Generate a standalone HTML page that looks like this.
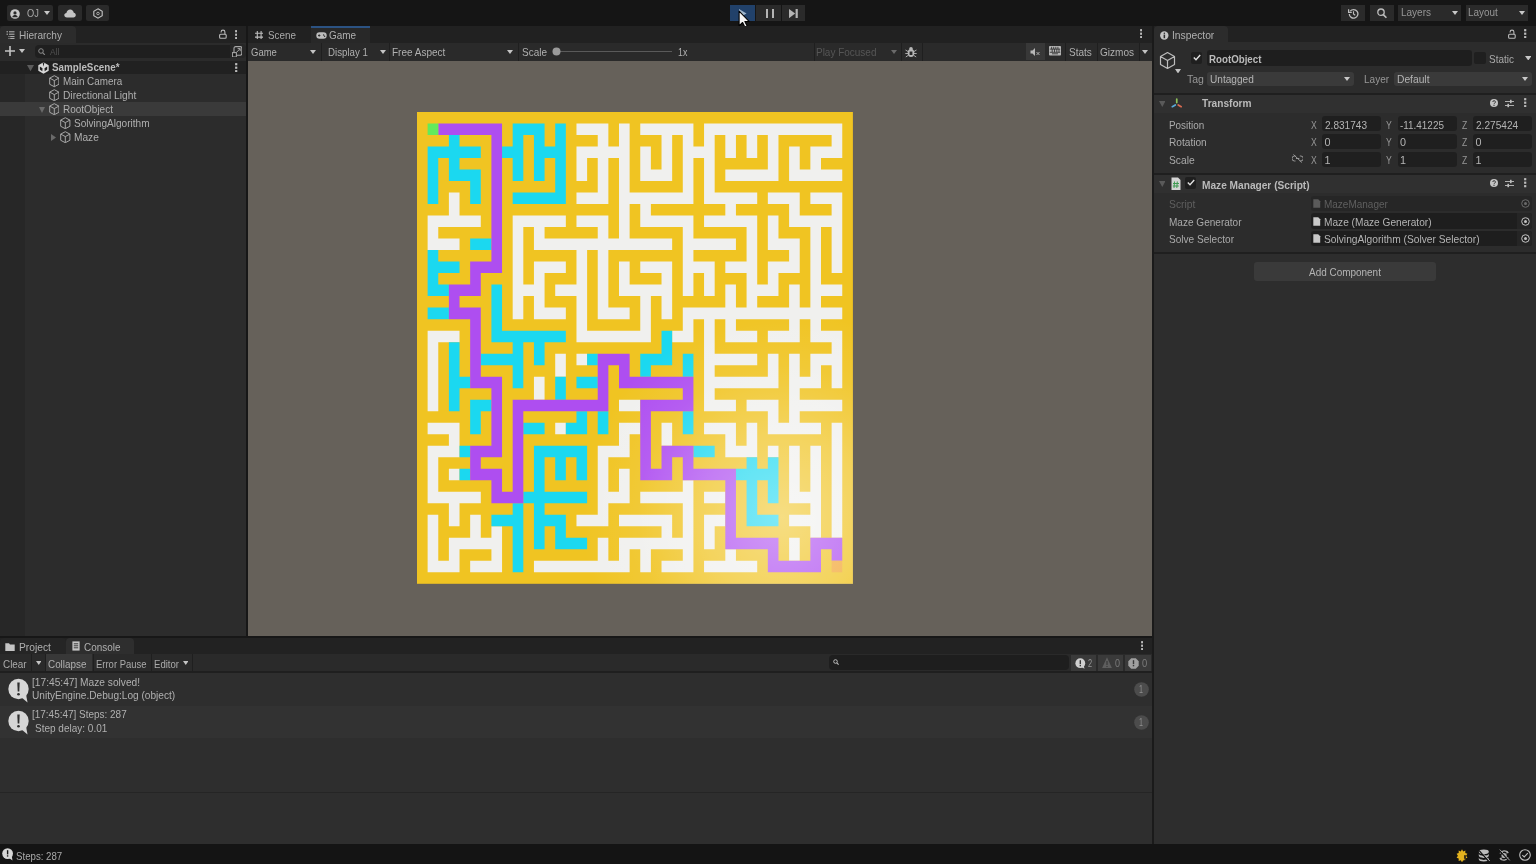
<!DOCTYPE html>
<html><head><meta charset="utf-8"><style>*{margin:0;padding:0;box-sizing:border-box}
html,body{width:1536px;height:864px;overflow:hidden;background:#141414}
body{position:relative;font-family:"Liberation Sans",sans-serif;font-size:11px;color:#c2c2c2}
.a{position:absolute}
.t{position:absolute;white-space:nowrap;line-height:1;transform-origin:0 0;filter:blur(0.35px)}
</style></head><body>
<div class="a" style="left:0px;top:0px;width:1536px;height:26px;background:#151515;"></div>
<div class="a" style="left:6.5px;top:5px;width:46.5px;height:16px;background:#2a2a2a;border-radius:2px"></div>
<div class="a" style="left:58px;top:5px;width:23.5px;height:16px;background:#2a2a2a;border-radius:2px"></div>
<div class="a" style="left:86px;top:5px;width:23px;height:16px;background:#2a2a2a;border-radius:2px"></div>
<svg class="a" style="left:10px;top:8.5px" width="10" height="10" viewBox="0 0 10 10"><circle cx="5" cy="5" r="4.8" fill="#c8c8c8"/><circle cx="5" cy="3.9" r="1.6" fill="#2a2a2a"/><path d="M2.2 8.2C2.8 6.6 3.8 6.1 5 6.1S7.2 6.6 7.8 8.2" fill="#2a2a2a"/></svg>
<div class="t" style="left:26.80px;top:8.21px;font-size:10.5px;color:#aaaaaa;transform:scaleX(0.8810);">OJ</div>
<svg class="a" style="left:44.2px;top:11.2px" width="6" height="4" viewBox="0 0 6 4"><path d="M0 0H6L3.0 4z" fill="#c8c8c8"/></svg>
<svg class="a" style="left:63.5px;top:9px" width="12" height="9" viewBox="0 0 12 9"><path d="M3 8.5C1.3 8.5 0.3 7.4 0.3 6.1C0.3 4.9 1.2 4 2.4 3.9C2.8 1.9 4.3 0.6 6.2 0.6C8.1 0.6 9.5 2 9.8 3.8C11 3.9 11.8 4.9 11.8 6.1C11.8 7.4 10.8 8.5 9.4 8.5Z" fill="#c4c4c4"/></svg>
<svg class="a" style="left:92.5px;top:8px" width="10" height="11" viewBox="0 0 10 11"><path d="M5 0.8L9.2 3.2V7.8L5 10.2L0.8 7.8V3.2Z" fill="none" stroke="#c4c4c4" stroke-width="1.1"/><circle cx="5" cy="5.5" r="1.3" fill="none" stroke="#c4c4c4" stroke-width="0.8"/></svg>
<div class="a" style="left:730.3px;top:4.8px;width:25px;height:16px;background:#21416a;"></div>
<div class="a" style="left:756px;top:5px;width:25.2px;height:16px;background:#2a2a2a;"></div>
<div class="a" style="left:782px;top:5px;width:23.3px;height:16px;background:#2a2a2a;"></div>
<svg class="a" style="left:739px;top:8.5px" width="8" height="9" viewBox="0 0 8 9"><path d="M0 0L7.5 4.5L0 9Z" fill="#9fb6cc"/></svg>
<div class="a" style="left:765.6px;top:8.8px;width:2.7px;height:8.8px;background:#b4b4b4;"></div>
<div class="a" style="left:771.5px;top:8.8px;width:2.7px;height:8.8px;background:#b4b4b4;"></div>
<svg class="a" style="left:789.4px;top:8.5px" width="10" height="9.2" viewBox="0 0 10 9.2"><path d="M0 0L6.2 4.6L0 9.2Z" fill="#b4b4b4"/><rect x="6.6" y="0" width="2.2" height="9.2" fill="#b4b4b4"/></svg>
<svg class="a" style="left:737.6px;top:10.3px" width="12" height="18.5" viewBox="0 0 11 17"><path d="M1 1V14.5L4.2 11.5L6.6 16.2L8.6 15.2L6.3 10.6H10.4Z" fill="#f4f4f4" stroke="#000" stroke-width="1" stroke-linejoin="round"/></svg>
<div class="a" style="left:1340.7px;top:5px;width:24.4px;height:15.8px;background:#2a2a2a;"></div>
<div class="a" style="left:1369.6px;top:5px;width:24.1px;height:15.8px;background:#2a2a2a;"></div>
<div class="a" style="left:1398.1px;top:5px;width:62.7px;height:15.8px;background:#2a2a2a;"></div>
<div class="a" style="left:1465.5px;top:5px;width:62.7px;height:15.8px;background:#2a2a2a;"></div>
<svg class="a" style="left:1347.5px;top:7.5px" width="11" height="11" viewBox="0 0 11 11"><path d="M2.2 3.2A4.3 4.3 0 1 1 1.3 6" fill="none" stroke="#bdbdbd" stroke-width="1.3"/><path d="M0.6 1.2V4.4H3.8" fill="none" stroke="#bdbdbd" stroke-width="1.2"/><path d="M5.5 3.3V6L7.2 7.2" fill="none" stroke="#bdbdbd" stroke-width="1.1"/></svg>
<svg class="a" style="left:1376.5px;top:7.5px" width="10" height="11" viewBox="0 0 10 11"><circle cx="4" cy="4.2" r="3.2" fill="none" stroke="#bdbdbd" stroke-width="1.3"/><path d="M6.3 6.6L9.4 9.8" stroke="#bdbdbd" stroke-width="1.6"/></svg>
<div class="t" style="left:1401.00px;top:8.34px;font-size:10px;color:#979797;">Layers</div>
<svg class="a" style="left:1451.5px;top:10.9px" width="6" height="4" viewBox="0 0 6 4"><path d="M0 0H6L3.0 4z" fill="#c8c8c8"/></svg>
<div class="t" style="left:1468.00px;top:8.34px;font-size:10px;color:#979797;transform:scaleX(0.9919);">Layout</div>
<svg class="a" style="left:1519.0px;top:10.9px" width="6" height="4" viewBox="0 0 6 4"><path d="M0 0H6L3.0 4z" fill="#c8c8c8"/></svg>
<div class="a" style="left:0px;top:26px;width:246px;height:16.5px;background:#222222;"></div>
<div class="a" style="left:0px;top:26px;width:76px;height:16.5px;background:#2c2c2c;border-radius:4px 4px 0 0"></div>
<svg class="a" style="left:6px;top:30.5px" width="9" height="8" viewBox="0 0 9 8"><path d="M0.5 0.8H2M3 0.8H8.5M0.5 3.2H2M3 3.2H8.5M2.5 5.6H3.5M4.2 5.6H8.5M2.5 7.6H3.5M4.2 7.6H8.5" stroke="#b8b8b8" stroke-width="1"/></svg>
<div class="t" style="left:18.50px;top:30.46px;font-size:10.8px;color:#aeaeae;transform:scaleX(0.9295);">Hierarchy</div>
<svg class="a" style="left:218.8px;top:29px" width="8" height="10" viewBox="0 0 8 10"><rect x="0.6" y="5.2" width="6.6" height="4" rx="1" fill="none" stroke="#b8b8b8" stroke-width="1.1"/><path d="M5.9 5.2V3A1.9 1.9 0 0 0 2.1 3V3.6" fill="none" stroke="#b8b8b8" stroke-width="1.1"/></svg>
<svg class="a" style="left:234.60000000000002px;top:29.5px" width="2.4" height="9.4" viewBox="0 0 2.4 9.4"><rect x="0.1" y="0.1" width="2.2" height="2.2" fill="#bdbdbd"/><rect x="0.1" y="3.6" width="2.2" height="2.2" fill="#bdbdbd"/><rect x="0.1" y="7.1" width="2.2" height="2.2" fill="#bdbdbd"/></svg>
<div class="a" style="left:0px;top:42.5px;width:246px;height:18px;background:#2b2b2b;"></div>
<svg class="a" style="left:5.4px;top:46.2px" width="10" height="10" viewBox="0 0 10 10"><path d="M5 0V10M0 5H10" stroke="#c4c4c4" stroke-width="1.6"/></svg>
<svg class="a" style="left:18.5px;top:49.0px" width="6" height="4" viewBox="0 0 6 4"><path d="M0 0H6L3.0 4z" fill="#c4c4c4"/></svg>
<div class="a" style="left:34.7px;top:44.5px;width:210.7px;height:13.6px;background:#1f1f1f;border-radius:4px"></div>
<svg class="a" style="left:38px;top:47.5px" width="8" height="7.5" viewBox="0 0 8 7.5"><circle cx="3" cy="3" r="2.3" fill="none" stroke="#8a8a8a" stroke-width="1"/><path d="M4.6 4.6L6.8 6.8" stroke="#8a8a8a" stroke-width="1.2"/></svg>
<div class="t" style="left:50.00px;top:46.56px;font-size:9.5px;color:#515151;transform:scaleX(0.8806);">All</div>
<div class="a" style="left:229.5px;top:44.3px;width:16.5px;height:14px;background:#262626;border-radius:0 4px 4px 0"></div>
<svg class="a" style="left:231.8px;top:45.5px" width="10.5" height="11.5" viewBox="0 0 10.5 11.5"><rect x="2" y="0.6" width="7.8" height="8.6" rx="1.6" fill="none" stroke="#a8a8a8" stroke-width="1.1"/><path d="M4.5 6.3L8 2.8M5.6 2.6H8.2V5.2" fill="none" stroke="#a8a8a8" stroke-width="1"/><rect x="0.4" y="6.6" width="4" height="4.4" fill="#262626" stroke="#a8a8a8" stroke-width="1"/><rect x="1.7" y="8" width="1.4" height="1.6" fill="#111"/></svg>
<div class="a" style="left:0px;top:60.6px;width:246px;height:13.6px;background:#212121;"></div>
<div class="a" style="left:0px;top:74.2px;width:246px;height:562px;background:#2c2c2c;"></div>
<div class="a" style="left:0px;top:74.2px;width:25.4px;height:562px;background:#272727;"></div>
<div class="a" style="left:0px;top:102.4px;width:246px;height:13.6px;background:#3a3a3a;"></div>
<svg class="a" style="left:27.2px;top:65.2px" width="7" height="6.2" viewBox="0 0 7 6.2"><path d="M0 0H7L3.5 6.2z" fill="#5c5c5c"/></svg>
<svg class="a" style="left:37.6px;top:61.5px" width="11" height="12" viewBox="0 0 11 12"><path d="M5.5 0.3L10.7 3.2V8.8L5.5 11.7L0.3 8.8V3.2Z" fill="#d8d8d8"/><path d="M4.6 0.5L5.5 4.8L6.4 0.5Z" fill="#212121"/><path d="M1.8 4.6L4.5 6.2L4.3 9.2L1.8 7.6Z M9.2 4.6L6.5 6.2L6.7 9.2L9.2 7.6Z" fill="#212121"/></svg>
<div class="t" style="left:52.10px;top:61.91px;font-size:10.5px;color:#bdbdbd;font-weight:bold;transform:scaleX(0.9333);">SampleScene*</div>
<svg class="a" style="left:235.4px;top:62.5px" width="2.4" height="9.4" viewBox="0 0 2.4 9.4"><rect x="0.1" y="0.1" width="2.2" height="2.2" fill="#bdbdbd"/><rect x="0.1" y="3.6" width="2.2" height="2.2" fill="#bdbdbd"/><rect x="0.1" y="7.1" width="2.2" height="2.2" fill="#bdbdbd"/></svg>
<svg class="a" style="left:48.7px;top:75.30000000000001px" width="10.6" height="12.4" viewBox="0 0 10.6 12.4"><g fill="none" stroke="#a8a8a8" stroke-width="1" stroke-linejoin="round"><path d="M5.3 0.7L9.9 3.1V9.3L5.3 11.7L0.7 9.3V3.1Z"/><path d="M0.7 3.1L5.3 5.6L9.9 3.1M5.3 5.6V11.7"/></g></svg>
<div class="t" style="left:62.60px;top:76.31px;font-size:10.5px;color:#b0b0b0;transform:scaleX(0.9386);">Main Camera</div>
<svg class="a" style="left:48.7px;top:89.0px" width="10.6" height="12.4" viewBox="0 0 10.6 12.4"><g fill="none" stroke="#a8a8a8" stroke-width="1" stroke-linejoin="round"><path d="M5.3 0.7L9.9 3.1V9.3L5.3 11.7L0.7 9.3V3.1Z"/><path d="M0.7 3.1L5.3 5.6L9.9 3.1M5.3 5.6V11.7"/></g></svg>
<div class="t" style="left:62.60px;top:90.11px;font-size:10.5px;color:#b0b0b0;transform:scaleX(0.9725);">Directional Light</div>
<svg class="a" style="left:39.0px;top:106.6px" width="6" height="6" viewBox="0 0 6 6"><path d="M0 0H6L3.0 6z" fill="#6a6a6a"/></svg>
<svg class="a" style="left:48.7px;top:102.9px" width="10.6" height="12.4" viewBox="0 0 10.6 12.4"><g fill="none" stroke="#a8a8a8" stroke-width="1" stroke-linejoin="round"><path d="M5.3 0.7L9.9 3.1V9.3L5.3 11.7L0.7 9.3V3.1Z"/><path d="M0.7 3.1L5.3 5.6L9.9 3.1M5.3 5.6V11.7"/></g></svg>
<div class="t" style="left:62.60px;top:104.01px;font-size:10.5px;color:#b0b0b0;transform:scaleX(0.9504);">RootObject</div>
<svg class="a" style="left:60px;top:116.7px" width="10.6" height="12.4" viewBox="0 0 10.6 12.4"><g fill="none" stroke="#a8a8a8" stroke-width="1" stroke-linejoin="round"><path d="M5.3 0.7L9.9 3.1V9.3L5.3 11.7L0.7 9.3V3.1Z"/><path d="M0.7 3.1L5.3 5.6L9.9 3.1M5.3 5.6V11.7"/></g></svg>
<div class="t" style="left:74.00px;top:117.91px;font-size:10.5px;color:#b0b0b0;transform:scaleX(0.9590);">SolvingAlgorithm</div>
<svg class="a" style="left:50.9px;top:134.1px" width="5" height="7" viewBox="0 0 5 7"><path d="M0 0V7L5 3.5z" fill="#6a6a6a"/></svg>
<svg class="a" style="left:60px;top:130.5px" width="10.6" height="12.4" viewBox="0 0 10.6 12.4"><g fill="none" stroke="#a8a8a8" stroke-width="1" stroke-linejoin="round"><path d="M5.3 0.7L9.9 3.1V9.3L5.3 11.7L0.7 9.3V3.1Z"/><path d="M0.7 3.1L5.3 5.6L9.9 3.1M5.3 5.6V11.7"/></g></svg>
<div class="t" style="left:74.00px;top:131.61px;font-size:10.5px;color:#b0b0b0;transform:scaleX(0.9676);">Maze</div>
<div class="a" style="left:246px;top:26px;width:2px;height:612px;background:#171717;"></div>
<div class="a" style="left:248px;top:26px;width:904px;height:16.5px;background:#212121;"></div>
<div class="a" style="left:311.3px;top:26px;width:58.5px;height:16.5px;background:#282828;"></div>
<div class="a" style="left:311.3px;top:26px;width:58.5px;height:1.6px;background:#2b5282;"></div>
<svg class="a" style="left:255px;top:31px" width="8.4" height="8.4" viewBox="0 0 8.4 8.4"><path d="M2.3 0V8.4M6.1 0V8.4M0 2.3H8.4M0 6.1H8.4" stroke="#bdbdbd" stroke-width="1.1"/></svg>
<div class="t" style="left:267.50px;top:30.36px;font-size:10.8px;color:#aaaaaa;transform:scaleX(0.9115);">Scene</div>
<svg class="a" style="left:315.7px;top:31.5px" width="11" height="7" viewBox="0 0 11 7"><rect x="0.3" y="0.3" width="10.4" height="6.4" rx="3.2" fill="#bdbdbd"/><path d="M2 3.5H4.4M3.2 2.3V4.7" stroke="#2c2c2c" stroke-width="0.9"/><circle cx="7.6" cy="3" r="0.7" fill="#2c2c2c"/><circle cx="8.6" cy="4.2" r="0.7" fill="#2c2c2c"/></svg>
<div class="t" style="left:329.00px;top:30.36px;font-size:10.8px;color:#b0b0b0;transform:scaleX(0.9185);">Game</div>
<svg class="a" style="left:1139.8px;top:28.8px" width="2.4" height="9.4" viewBox="0 0 2.4 9.4"><rect x="0.1" y="0.1" width="2.2" height="2.2" fill="#bdbdbd"/><rect x="0.1" y="3.6" width="2.2" height="2.2" fill="#bdbdbd"/><rect x="0.1" y="7.1" width="2.2" height="2.2" fill="#bdbdbd"/></svg>
<div class="a" style="left:248px;top:42.5px;width:904px;height:18px;background:#2a2a2a;"></div>
<div class="a" style="left:321px;top:42.5px;width:1px;height:18px;background:#1f1f1f;"></div>
<div class="a" style="left:389px;top:42.5px;width:1px;height:18px;background:#1f1f1f;"></div>
<div class="a" style="left:517.6px;top:42.5px;width:1px;height:18px;background:#1f1f1f;"></div>
<div class="a" style="left:813.7px;top:42.5px;width:1px;height:18px;background:#1f1f1f;"></div>
<div class="a" style="left:901px;top:42.5px;width:1px;height:18px;background:#1f1f1f;"></div>
<div class="a" style="left:921.5px;top:42.5px;width:1px;height:18px;background:#1f1f1f;"></div>
<div class="a" style="left:1065px;top:42.5px;width:1px;height:18px;background:#1f1f1f;"></div>
<div class="a" style="left:1096.7px;top:42.5px;width:1px;height:18px;background:#1f1f1f;"></div>
<div class="a" style="left:1138.6px;top:42.5px;width:1px;height:18px;background:#1f1f1f;"></div>
<div class="a" style="left:1025.5px;top:43px;width:19px;height:17px;background:#383838;"></div>
<div class="t" style="left:251.40px;top:46.91px;font-size:10.5px;color:#b0b0b0;transform:scaleX(0.9042);">Game</div>
<svg class="a" style="left:310.0px;top:49.5px" width="6" height="4" viewBox="0 0 6 4"><path d="M0 0H6L3.0 4z" fill="#c4c4c4"/></svg>
<div class="t" style="left:328.00px;top:46.91px;font-size:10.5px;color:#b0b0b0;transform:scaleX(0.9228);">Display 1</div>
<svg class="a" style="left:379.5px;top:49.5px" width="6" height="4" viewBox="0 0 6 4"><path d="M0 0H6L3.0 4z" fill="#c4c4c4"/></svg>
<div class="t" style="left:392.00px;top:46.91px;font-size:10.5px;color:#b0b0b0;transform:scaleX(0.9526);">Free Aspect</div>
<svg class="a" style="left:507.4px;top:49.5px" width="6" height="4" viewBox="0 0 6 4"><path d="M0 0H6L3.0 4z" fill="#c4c4c4"/></svg>
<div class="t" style="left:522.40px;top:46.91px;font-size:10.5px;color:#b0b0b0;transform:scaleX(0.9498);">Scale</div>
<div class="a" style="left:560px;top:51px;width:112px;height:1px;background:#5a5a5a;"></div>
<svg class="a" style="left:552px;top:47px" width="9" height="9" viewBox="0 0 9 9"><circle cx="4.5" cy="4.5" r="4" fill="#9a9a9a"/></svg>
<div class="t" style="left:677.70px;top:46.91px;font-size:10.5px;color:#b0b0b0;transform:scaleX(0.8362);">1x</div>
<div class="t" style="left:816.00px;top:46.91px;font-size:10.5px;color:#565656;transform:scaleX(0.9502);">Play Focused</div>
<svg class="a" style="left:891.3px;top:49.5px" width="6" height="4" viewBox="0 0 6 4"><path d="M0 0H6L3.0 4z" fill="#6a6a6a"/></svg>
<svg class="a" style="left:905px;top:45.5px" width="12" height="12" viewBox="0 0 12 12"><ellipse cx="6" cy="7" rx="3.3" ry="4" fill="#b8b8b8"/><circle cx="6" cy="2.8" r="1.8" fill="#b8b8b8"/><path d="M0.5 4L3 5.5M11.5 4L9 5.5M0.3 7.5H3M11.7 7.5H9M0.8 11L3 9.5M11.2 11L9 9.5" stroke="#b8b8b8" stroke-width="0.9"/><rect x="4.6" y="5.5" width="2.8" height="3.5" fill="#2a2a2a"/></svg>
<svg class="a" style="left:1030px;top:47px" width="11" height="10" viewBox="0 0 11 10"><path d="M0.5 3.5H2.5L5 1V9L2.5 6.5H0.5Z" fill="#b8b8b8"/><path d="M6.5 5L9.5 8M9.5 5L6.5 8" stroke="#b8b8b8" stroke-width="0.9"/></svg>
<svg class="a" style="left:1049.2px;top:46.4px" width="12" height="9.6" viewBox="0 0 12 9.6"><rect x="0" y="0" width="12" height="9.6" rx="0.8" fill="#b4b4b4"/><path d="M0.8 3.1H11.2M0.8 6.3H11.2M2.6 0.8V3.1M4.7 0.8V3.1M6.8 0.8V3.1M8.9 0.8V3.1M3.2 3.1V6.3M5.5 3.1V6.3M7.8 3.1V6.3M10 3.1V6.3M3 7.8H9" stroke="#2a2a2a" stroke-width="0.8"/></svg>
<div class="t" style="left:1069.00px;top:46.91px;font-size:10.5px;color:#b0b0b0;transform:scaleX(0.9545);">Stats</div>
<div class="t" style="left:1099.70px;top:46.91px;font-size:10.5px;color:#b0b0b0;transform:scaleX(0.9565);">Gizmos</div>
<svg class="a" style="left:1142.0px;top:49.5px" width="6" height="4" viewBox="0 0 6 4"><path d="M0 0H6L3.0 4z" fill="#c4c4c4"/></svg>
<div class="a" style="left:248px;top:60.6px;width:904px;height:575.4px;background:#66615a;"></div>
<svg class="a" style="left:417px;top:112.1px" viewBox="0 0 41 41" preserveAspectRatio="none" width="435.9" height="471.8"><rect width="41" height="41" fill="#f0c422"/><path fill="#f0f0ee" d="M15 1h3v1h-3zM19 1h1v1h-1zM21 1h5v1h-5zM27 1h13v1h-13zM17 2h1v1h-1zM19 2h1v1h-1zM23 2h1v1h-1zM25 2h1v1h-1zM27 2h1v1h-1zM29 2h1v1h-1zM31 2h1v1h-1zM33 2h1v1h-1zM39 2h1v1h-1zM15 3h5v1h-5zM21 3h1v1h-1zM23 3h1v1h-1zM25 3h3v1h-3zM29 3h1v1h-1zM31 3h1v1h-1zM33 3h1v1h-1zM35 3h1v1h-1zM37 3h3v1h-3zM15 4h1v1h-1zM17 4h1v1h-1zM19 4h1v1h-1zM21 4h1v1h-1zM23 4h1v1h-1zM25 4h1v1h-1zM27 4h1v1h-1zM33 4h1v1h-1zM35 4h1v1h-1zM37 4h1v1h-1zM15 5h1v1h-1zM17 5h1v1h-1zM19 5h1v1h-1zM21 5h3v1h-3zM25 5h1v1h-1zM27 5h1v1h-1zM29 5h5v1h-5zM35 5h5v1h-5zM17 6h1v1h-1zM19 6h1v1h-1zM25 6h1v1h-1zM27 6h1v1h-1zM3 7h1v1h-1zM15 7h3v1h-3zM19 7h7v1h-7zM27 7h5v1h-5zM33 7h3v1h-3zM37 7h3v1h-3zM3 8h1v1h-1zM19 8h1v1h-1zM21 8h1v1h-1zM29 8h1v1h-1zM35 8h1v1h-1zM39 8h1v1h-1zM1 9h5v1h-5zM9 9h5v1h-5zM15 9h3v1h-3zM19 9h1v1h-1zM21 9h5v1h-5zM27 9h5v1h-5zM33 9h1v1h-1zM35 9h5v1h-5zM1 10h1v1h-1zM9 10h1v1h-1zM11 10h1v1h-1zM17 10h1v1h-1zM19 10h1v1h-1zM25 10h1v1h-1zM31 10h1v1h-1zM33 10h1v1h-1zM37 10h1v1h-1zM39 10h1v1h-1zM1 11h3v1h-3zM9 11h1v1h-1zM11 11h13v1h-13zM25 11h5v1h-5zM31 11h1v1h-1zM33 11h3v1h-3zM37 11h1v1h-1zM39 11h1v1h-1zM9 12h1v1h-1zM15 12h1v1h-1zM17 12h1v1h-1zM25 12h1v1h-1zM31 12h1v1h-1zM35 12h1v1h-1zM37 12h1v1h-1zM39 12h1v1h-1zM9 13h1v1h-1zM11 13h3v1h-3zM15 13h1v1h-1zM17 13h1v1h-1zM19 13h1v1h-1zM21 13h3v1h-3zM25 13h3v1h-3zM29 13h3v1h-3zM33 13h3v1h-3zM37 13h1v1h-1zM39 13h1v1h-1zM9 14h1v1h-1zM11 14h1v1h-1zM15 14h1v1h-1zM17 14h1v1h-1zM19 14h1v1h-1zM23 14h1v1h-1zM25 14h1v1h-1zM27 14h1v1h-1zM31 14h1v1h-1zM33 14h1v1h-1zM37 14h1v1h-1zM9 15h3v1h-3zM13 15h3v1h-3zM17 15h1v1h-1zM19 15h5v1h-5zM25 15h1v1h-1zM27 15h1v1h-1zM29 15h1v1h-1zM31 15h3v1h-3zM35 15h1v1h-1zM37 15h3v1h-3zM9 16h1v1h-1zM11 16h1v1h-1zM15 16h1v1h-1zM17 16h1v1h-1zM21 16h1v1h-1zM23 16h1v1h-1zM29 16h1v1h-1zM31 16h1v1h-1zM35 16h1v1h-1zM37 16h1v1h-1zM9 17h1v1h-1zM11 17h3v1h-3zM15 17h1v1h-1zM17 17h3v1h-3zM21 17h1v1h-1zM23 17h1v1h-1zM25 17h15v1h-15zM15 18h1v1h-1zM21 18h1v1h-1zM25 18h1v1h-1zM27 18h1v1h-1zM29 18h1v1h-1zM35 18h1v1h-1zM37 18h1v1h-1zM1 19h3v1h-3zM15 19h7v1h-7zM24 19h2v1h-2zM27 19h1v1h-1zM29 19h3v1h-3zM33 19h3v1h-3zM37 19h3v1h-3zM1 20h1v1h-1zM27 20h1v1h-1zM39 20h1v1h-1zM1 21h1v1h-1zM13 21h1v1h-1zM15 21h1v1h-1zM27 21h5v1h-5zM33 21h1v1h-1zM35 21h1v1h-1zM37 21h3v1h-3zM1 22h1v1h-1zM13 22h1v1h-1zM27 22h1v1h-1zM33 22h1v1h-1zM35 22h1v1h-1zM37 22h1v1h-1zM39 22h1v1h-1zM1 23h1v1h-1zM11 23h1v1h-1zM27 23h7v1h-7zM35 23h3v1h-3zM39 23h1v1h-1zM1 24h1v1h-1zM11 24h1v1h-1zM27 24h1v1h-1zM35 24h1v1h-1zM1 25h1v1h-1zM19 25h2v1h-2zM27 25h3v1h-3zM31 25h3v1h-3zM35 25h5v1h-5zM33 26h1v1h-1zM35 26h1v1h-1zM1 27h3v1h-3zM13 27h1v1h-1zM19 27h2v1h-2zM23 27h1v1h-1zM27 27h3v1h-3zM31 27h1v1h-1zM33 27h5v1h-5zM39 27h1v1h-1zM3 28h1v1h-1zM19 28h1v1h-1zM23 28h1v1h-1zM29 28h1v1h-1zM31 28h1v1h-1zM39 28h1v1h-1zM1 29h3v1h-3zM17 29h3v1h-3zM29 29h3v1h-3zM33 29h1v1h-1zM35 29h1v1h-1zM37 29h1v1h-1zM39 29h1v1h-1zM1 30h1v1h-1zM17 30h1v1h-1zM35 30h1v1h-1zM37 30h1v1h-1zM39 30h1v1h-1zM1 31h1v1h-1zM3 31h1v1h-1zM17 31h1v1h-1zM19 31h1v1h-1zM35 31h1v1h-1zM37 31h1v1h-1zM39 31h1v1h-1zM1 32h1v1h-1zM17 32h1v1h-1zM19 32h1v1h-1zM25 32h1v1h-1zM35 32h1v1h-1zM37 32h1v1h-1zM39 32h1v1h-1zM1 33h5v1h-5zM17 33h3v1h-3zM21 33h5v1h-5zM27 33h2v1h-2zM35 33h3v1h-3zM39 33h1v1h-1zM3 34h1v1h-1zM17 34h1v1h-1zM25 34h1v1h-1zM37 34h1v1h-1zM39 34h1v1h-1zM1 35h1v1h-1zM3 35h1v1h-1zM5 35h1v1h-1zM15 35h3v1h-3zM19 35h5v1h-5zM25 35h1v1h-1zM27 35h2v1h-2zM35 35h3v1h-3zM39 35h1v1h-1zM1 36h1v1h-1zM5 36h1v1h-1zM7 36h1v1h-1zM23 36h1v1h-1zM25 36h1v1h-1zM27 36h1v1h-1zM37 36h1v1h-1zM39 36h1v1h-1zM1 37h1v1h-1zM3 37h5v1h-5zM17 37h1v1h-1zM19 37h7v1h-7zM27 37h1v1h-1zM35 37h1v1h-1zM1 38h1v1h-1zM3 38h1v1h-1zM7 38h1v1h-1zM17 38h1v1h-1zM19 38h1v1h-1zM21 38h1v1h-1zM25 38h1v1h-1zM29 38h1v1h-1zM35 38h1v1h-1zM1 39h3v1h-3zM5 39h3v1h-3zM11 39h9v1h-9zM21 39h1v1h-1zM23 39h3v1h-3zM27 39h5v1h-5z"/><path fill="#1bd8f0" d="M9 1h3v1h-3zM13 1h1v1h-1zM3 2h1v1h-1zM9 2h1v1h-1zM11 2h1v1h-1zM13 2h1v1h-1zM1 3h5v1h-5zM8 3h2v1h-2zM11 3h3v1h-3zM1 4h1v1h-1zM3 4h1v1h-1zM9 4h1v1h-1zM11 4h1v1h-1zM13 4h1v1h-1zM1 5h1v1h-1zM3 5h3v1h-3zM9 5h1v1h-1zM11 5h1v1h-1zM13 5h1v1h-1zM1 6h1v1h-1zM5 6h1v1h-1zM13 6h1v1h-1zM1 7h1v1h-1zM5 7h1v1h-1zM9 7h5v1h-5zM5 11h2v1h-2zM1 12h1v1h-1zM1 13h3v1h-3zM1 14h1v1h-1zM1 15h2v1h-2zM7 15h1v1h-1zM7 16h1v1h-1zM1 17h2v1h-2zM7 17h1v1h-1zM7 18h1v1h-1zM7 19h7v1h-7zM23 19h1v1h-1zM3 20h1v1h-1zM9 20h1v1h-1zM11 20h1v1h-1zM23 20h1v1h-1zM3 21h1v1h-1zM6 21h4v1h-4zM11 21h1v1h-1zM16 21h1v1h-1zM21 21h3v1h-3zM25 21h1v1h-1zM3 22h1v1h-1zM9 22h1v1h-1zM21 22h1v1h-1zM25 22h1v1h-1zM3 23h2v1h-2zM9 23h1v1h-1zM13 23h1v1h-1zM15 23h2v1h-2zM3 24h1v1h-1zM13 24h1v1h-1zM3 25h1v1h-1zM5 25h2v1h-2zM5 26h1v1h-1zM15 26h1v1h-1zM17 26h1v1h-1zM25 26h1v1h-1zM5 27h1v1h-1zM10 27h2v1h-2zM14 27h2v1h-2zM17 27h1v1h-1zM25 27h1v1h-1zM4 29h1v1h-1zM11 29h5v1h-5zM26 29h2v1h-2zM11 30h1v1h-1zM13 30h1v1h-1zM15 30h1v1h-1zM31 30h1v1h-1zM33 30h1v1h-1zM4 31h1v1h-1zM11 31h1v1h-1zM13 31h1v1h-1zM15 31h1v1h-1zM30 31h4v1h-4zM11 32h1v1h-1zM31 32h1v1h-1zM33 32h1v1h-1zM10 33h6v1h-6zM31 33h1v1h-1zM33 33h1v1h-1zM9 34h1v1h-1zM11 34h1v1h-1zM31 34h1v1h-1zM7 35h3v1h-3zM11 35h3v1h-3zM31 35h3v1h-3zM9 36h1v1h-1zM11 36h1v1h-1zM13 36h1v1h-1zM9 37h1v1h-1zM11 37h1v1h-1zM13 37h3v1h-3zM9 38h1v1h-1zM9 39h1v1h-1z"/><path fill="#ae4ef0" d="M2 1h6v1h-6zM7 2h1v1h-1zM7 3h1v1h-1zM7 4h1v1h-1zM7 5h1v1h-1zM7 6h1v1h-1zM7 7h1v1h-1zM7 8h1v1h-1zM7 9h1v1h-1zM7 10h1v1h-1zM7 11h1v1h-1zM7 12h1v1h-1zM5 13h3v1h-3zM5 14h1v1h-1zM3 15h3v1h-3zM3 16h1v1h-1zM3 17h3v1h-3zM5 18h1v1h-1zM5 19h1v1h-1zM5 20h1v1h-1zM5 21h1v1h-1zM17 21h3v1h-3zM5 22h1v1h-1zM17 22h1v1h-1zM19 22h1v1h-1zM5 23h3v1h-3zM17 23h1v1h-1zM19 23h7v1h-7zM7 24h1v1h-1zM17 24h1v1h-1zM25 24h1v1h-1zM7 25h1v1h-1zM9 25h9v1h-9zM21 25h5v1h-5zM7 26h1v1h-1zM9 26h1v1h-1zM21 26h1v1h-1zM7 27h1v1h-1zM9 27h1v1h-1zM21 27h1v1h-1zM7 28h1v1h-1zM9 28h1v1h-1zM21 28h1v1h-1zM5 29h3v1h-3zM9 29h1v1h-1zM21 29h1v1h-1zM23 29h3v1h-3zM5 30h1v1h-1zM9 30h1v1h-1zM21 30h1v1h-1zM23 30h1v1h-1zM25 30h1v1h-1zM5 31h3v1h-3zM9 31h1v1h-1zM21 31h3v1h-3zM25 31h5v1h-5zM7 32h1v1h-1zM9 32h1v1h-1zM29 32h1v1h-1zM7 33h3v1h-3zM29 33h1v1h-1zM29 34h1v1h-1zM29 35h1v1h-1zM29 36h1v1h-1zM29 37h5v1h-5zM37 37h3v1h-3zM33 38h1v1h-1zM37 38h1v1h-1zM39 38h1v1h-1zM33 39h5v1h-5z"/><path fill="#62ea5c" d="M1 1h1v1h-1z"/><path fill="#f2a634" d="M39 39h1v1h-1z"/></svg>
<div class="a" style="left:417px;top:112.1px;width:435.9px;height:471.8px;background:radial-gradient(ellipse 200px 210px at 365px 405px,rgba(255,255,255,.44),rgba(255,255,255,.27) 40%,rgba(255,255,255,.09) 72%,rgba(255,255,255,0))"></div>
<div class="a" style="left:1152px;top:26px;width:1.6px;height:818px;background:#1a1a1a;"></div>
<div class="a" style="left:1153.6px;top:26px;width:382.4px;height:16.2px;background:#222222;"></div>
<div class="a" style="left:1153.9px;top:26px;width:74.2px;height:16.2px;background:#2c2c2c;border-radius:4px 4px 0 0"></div>
<svg class="a" style="left:1160.4px;top:30.5px" width="8.6" height="9" viewBox="0 0 8.6 9"><circle cx="4.3" cy="4.5" r="4.2" fill="#c4c4c4"/><rect x="3.6" y="3.6" width="1.5" height="3.6" fill="#2c2c2c"/><circle cx="4.35" cy="2.2" r="0.8" fill="#2c2c2c"/></svg>
<div class="t" style="left:1171.85px;top:30.46px;font-size:10.8px;color:#b0b0b0;transform:scaleX(0.9517);">Inspector</div>
<svg class="a" style="left:1507.6px;top:29px" width="8" height="10" viewBox="0 0 8 10"><rect x="0.6" y="5.2" width="6.6" height="4" rx="1" fill="none" stroke="#b8b8b8" stroke-width="1.1"/><path d="M5.9 5.2V3A1.9 1.9 0 0 0 2.1 3V3.6" fill="none" stroke="#b8b8b8" stroke-width="1.1"/></svg>
<svg class="a" style="left:1524.3px;top:29px" width="2.4" height="9.4" viewBox="0 0 2.4 9.4"><rect x="0.1" y="0.1" width="2.2" height="2.2" fill="#bdbdbd"/><rect x="0.1" y="3.6" width="2.2" height="2.2" fill="#bdbdbd"/><rect x="0.1" y="7.1" width="2.2" height="2.2" fill="#bdbdbd"/></svg>
<div class="a" style="left:1153.6px;top:42.2px;width:382.4px;height:802px;background:#2d2d2d;"></div>
<div class="a" style="left:1153.6px;top:42.2px;width:382.4px;height:51px;background:#2c2c2c;"></div>
<div class="a" style="left:1153.6px;top:93px;width:382.4px;height:2px;background:#1f1f1f;"></div>
<svg class="a" style="left:1159px;top:51.3px" width="17" height="19" viewBox="0 0 17 18"><path d="M8.5 1L15.5 5V13L8.5 17L1.5 13V5Z M1.5 5L8.5 9L15.5 5M8.5 9V17" fill="none" stroke="#bdbdbd" stroke-width="1.2" stroke-linejoin="round"/></svg>
<svg class="a" style="left:1174.6px;top:68.95px" width="6" height="4.5" viewBox="0 0 6 4.5"><path d="M0 0H6L3.0 4.5z" fill="#c4c4c4"/></svg>
<div class="a" style="left:1191px;top:52px;width:11px;height:11.7px;background:#1f1f1f;border-radius:2px"></div>
<svg class="a" style="left:1192.5px;top:54px" width="8" height="7" viewBox="0 0 8 7"><path d="M0.8 3.6L3 5.8L7.2 1" fill="none" stroke="#e0e0e0" stroke-width="1.4"/></svg>
<div class="a" style="left:1207.3px;top:50px;width:264.7px;height:15.7px;background:#1e1e1e;border-radius:3px"></div>
<div class="t" style="left:1209.20px;top:53.86px;font-size:10.8px;color:#bbbbbb;font-weight:bold;transform:scaleX(0.9012);">RootObject</div>
<div class="a" style="left:1474px;top:52px;width:11.7px;height:11.7px;background:#1f1f1f;border-radius:2px"></div>
<div class="t" style="left:1489.00px;top:53.86px;font-size:10.8px;color:#aaaaaa;transform:scaleX(0.9201);">Static</div>
<svg class="a" style="left:1524.95px;top:55.95px" width="6.5" height="4.5" viewBox="0 0 6.5 4.5"><path d="M0 0H6.5L3.25 4.5z" fill="#c8c8c8"/></svg>
<div class="t" style="left:1186.50px;top:74.06px;font-size:10.8px;color:#979797;transform:scaleX(0.9711);">Tag</div>
<div class="a" style="left:1207px;top:72.2px;width:146.6px;height:13.6px;background:#3a3a3a;border-radius:3px"></div>
<div class="t" style="left:1209.70px;top:73.86px;font-size:10.8px;color:#b4b4b4;transform:scaleX(0.9355);">Untagged</div>
<svg class="a" style="left:1343.5px;top:77.0px" width="6" height="4" viewBox="0 0 6 4"><path d="M0 0H6L3.0 4z" fill="#c8c8c8"/></svg>
<div class="t" style="left:1364.00px;top:74.06px;font-size:10.8px;color:#979797;transform:scaleX(0.9266);">Layer</div>
<div class="a" style="left:1394px;top:72.2px;width:138px;height:13.6px;background:#3a3a3a;border-radius:3px"></div>
<div class="t" style="left:1396.50px;top:73.86px;font-size:10.8px;color:#b4b4b4;transform:scaleX(0.9500);">Default</div>
<svg class="a" style="left:1522.0px;top:77.0px" width="6" height="4" viewBox="0 0 6 4"><path d="M0 0H6L3.0 4z" fill="#c8c8c8"/></svg>
<div class="a" style="left:1153.6px;top:95px;width:382.4px;height:17.6px;background:#303030;"></div>
<svg class="a" style="left:1158.55px;top:100.8px" width="6.5" height="6" viewBox="0 0 6.5 6"><path d="M0 0H6.5L3.25 6z" fill="#5a5a5a"/></svg>
<svg class="a" style="left:1170.8px;top:97.6px" width="11.5" height="10.5" viewBox="0 0 11.5 10.5"><path d="M5.75 1V4.6" stroke="#8fc45a" stroke-width="1.7" stroke-linecap="round"/><path d="M4.3 6.9L1.3 8.7" stroke="#5aaad8" stroke-width="1.7" stroke-linecap="round"/><path d="M7.2 6.9L10.2 8.7" stroke="#d86a50" stroke-width="1.7" stroke-linecap="round"/></svg>
<div class="t" style="left:1202.00px;top:98.16px;font-size:10.8px;color:#bababa;font-weight:bold;transform:scaleX(0.9387);">Transform</div>
<svg class="a" style="left:1489.6px;top:98.8px" width="8" height="8" viewBox="0 0 8 8"><circle cx="4" cy="4" r="4" fill="#c4c4c4"/><path d="M2.8 3A1.3 1.3 0 1 1 4.6 4.2C4.1 4.5 4 4.7 4 5.2" fill="none" stroke="#333" stroke-width="1"/><circle cx="4" cy="6.4" r="0.55" fill="#333"/></svg>
<svg class="a" style="left:1505px;top:98.5px" width="9" height="9" viewBox="0 0 9 9"><path d="M0 2.5H9M0 6.5H9" stroke="#bdbdbd" stroke-width="0.9"/><rect x="5" y="0.8" width="1.6" height="3.4" fill="#bdbdbd"/><rect x="2.4" y="4.8" width="1.6" height="3.4" fill="#bdbdbd"/></svg>
<svg class="a" style="left:1524.2px;top:97.8px" width="2.4" height="9.4" viewBox="0 0 2.4 9.4"><rect x="0.1" y="0.1" width="2.2" height="2.2" fill="#bdbdbd"/><rect x="0.1" y="3.6" width="2.2" height="2.2" fill="#bdbdbd"/><rect x="0.1" y="7.1" width="2.2" height="2.2" fill="#bdbdbd"/></svg>
<div class="a" style="left:1153.6px;top:112.6px;width:382.4px;height:60.4px;background:#2c2c2c;"></div>
<div class="t" style="left:1168.80px;top:119.86px;font-size:10.8px;color:#aaaaaa;transform:scaleX(0.9165);">Position</div>
<div class="t" style="left:1310.80px;top:119.86px;font-size:10.8px;color:#979797;transform:scaleX(0.8000);">X</div>
<div class="a" style="left:1322px;top:116.4px;width:59.2px;height:15px;background:#1f1f1f;border-radius:3px"></div>
<div class="t" style="left:1324.60px;top:119.66px;font-size:10.8px;color:#b4b4b4;transform:scaleX(0.9328);">2.831743</div>
<div class="t" style="left:1386.00px;top:119.86px;font-size:10.8px;color:#979797;transform:scaleX(0.8000);">Y</div>
<div class="a" style="left:1397.5px;top:116.4px;width:59px;height:15px;background:#1f1f1f;border-radius:3px"></div>
<div class="t" style="left:1400.10px;top:119.66px;font-size:10.8px;color:#b4b4b4;transform:scaleX(0.9180);">-11.41225</div>
<div class="t" style="left:1461.60px;top:119.86px;font-size:10.8px;color:#979797;transform:scaleX(0.8000);">Z</div>
<div class="a" style="left:1472.9px;top:116.4px;width:59.1px;height:15px;background:#1f1f1f;border-radius:3px"></div>
<div class="t" style="left:1475.50px;top:119.66px;font-size:10.8px;color:#b4b4b4;transform:scaleX(0.9350);">2.275424</div>
<div class="t" style="left:1168.80px;top:137.46px;font-size:10.8px;color:#aaaaaa;transform:scaleX(0.9376);">Rotation</div>
<div class="t" style="left:1310.80px;top:137.46px;font-size:10.8px;color:#979797;transform:scaleX(0.8000);">X</div>
<div class="a" style="left:1322px;top:134px;width:59.2px;height:15px;background:#1f1f1f;border-radius:3px"></div>
<div class="t" style="left:1324.60px;top:137.26px;font-size:10.8px;color:#b4b4b4;">0</div>
<div class="t" style="left:1386.00px;top:137.46px;font-size:10.8px;color:#979797;transform:scaleX(0.8000);">Y</div>
<div class="a" style="left:1397.5px;top:134px;width:59px;height:15px;background:#1f1f1f;border-radius:3px"></div>
<div class="t" style="left:1400.10px;top:137.26px;font-size:10.8px;color:#b4b4b4;">0</div>
<div class="t" style="left:1461.60px;top:137.46px;font-size:10.8px;color:#979797;transform:scaleX(0.8000);">Z</div>
<div class="a" style="left:1472.9px;top:134px;width:59.1px;height:15px;background:#1f1f1f;border-radius:3px"></div>
<div class="t" style="left:1475.50px;top:137.26px;font-size:10.8px;color:#b4b4b4;">0</div>
<div class="t" style="left:1168.80px;top:155.06px;font-size:10.8px;color:#aaaaaa;transform:scaleX(0.9517);">Scale</div>
<div class="t" style="left:1310.80px;top:155.06px;font-size:10.8px;color:#979797;transform:scaleX(0.8000);">X</div>
<div class="a" style="left:1322px;top:151.6px;width:59.2px;height:15px;background:#1f1f1f;border-radius:3px"></div>
<div class="t" style="left:1324.60px;top:154.86px;font-size:10.8px;color:#b4b4b4;">1</div>
<div class="t" style="left:1386.00px;top:155.06px;font-size:10.8px;color:#979797;transform:scaleX(0.8000);">Y</div>
<div class="a" style="left:1397.5px;top:151.6px;width:59px;height:15px;background:#1f1f1f;border-radius:3px"></div>
<div class="t" style="left:1400.10px;top:154.86px;font-size:10.8px;color:#b4b4b4;">1</div>
<div class="t" style="left:1461.60px;top:155.06px;font-size:10.8px;color:#979797;transform:scaleX(0.8000);">Z</div>
<div class="a" style="left:1472.9px;top:151.6px;width:59.1px;height:15px;background:#1f1f1f;border-radius:3px"></div>
<div class="t" style="left:1475.50px;top:154.86px;font-size:10.8px;color:#b4b4b4;">1</div>
<svg class="a" style="left:1292px;top:154px" width="11.3" height="9" viewBox="0 0 11.3 9"><path d="M3.5 2H2.5A2.3 2.3 0 0 0 2.5 7H3.5M7.8 2H8.8A2.3 2.3 0 0 1 8.8 7H7.8M4 4.5H7.3M1.5 0.5L9.8 8.5" fill="none" stroke="#9a9a9a" stroke-width="1"/></svg>
<div class="a" style="left:1153.6px;top:173px;width:382.4px;height:2px;background:#1f1f1f;"></div>
<div class="a" style="left:1153.6px;top:175px;width:382.4px;height:18px;background:#303030;"></div>
<svg class="a" style="left:1158.55px;top:181.0px" width="6.5" height="6" viewBox="0 0 6.5 6"><path d="M0 0H6.5L3.25 6z" fill="#5a5a5a"/></svg>
<svg class="a" style="left:1171.4px;top:176.7px" width="10" height="13.8" viewBox="0 0 10 13.8"><path d="M0.5 0.5H7L9.5 3V13.3H0.5Z" fill="#d4d4d4"/><path d="M3.5 4.5L3 11M6.3 4.5L5.8 11M2 6.5H8M1.8 9H7.8" stroke="#3d9a50" stroke-width="1"/></svg>
<div class="a" style="left:1185.2px;top:177px;width:11.3px;height:11.5px;background:#1f1f1f;border-radius:2px"></div>
<svg class="a" style="left:1186.8px;top:179px" width="8" height="7" viewBox="0 0 8 7"><path d="M0.8 3.6L3 5.8L7.2 1" fill="none" stroke="#e0e0e0" stroke-width="1.4"/></svg>
<div class="t" style="left:1201.50px;top:179.86px;font-size:10.8px;color:#bababa;font-weight:bold;transform:scaleX(0.9392);">Maze Manager (Script)</div>
<svg class="a" style="left:1489.6px;top:179.2px" width="8" height="8" viewBox="0 0 8 8"><circle cx="4" cy="4" r="4" fill="#c4c4c4"/><path d="M2.8 3A1.3 1.3 0 1 1 4.6 4.2C4.1 4.5 4 4.7 4 5.2" fill="none" stroke="#333" stroke-width="1"/><circle cx="4" cy="6.4" r="0.55" fill="#333"/></svg>
<svg class="a" style="left:1505px;top:178.89999999999998px" width="9" height="9" viewBox="0 0 9 9"><path d="M0 2.5H9M0 6.5H9" stroke="#bdbdbd" stroke-width="0.9"/><rect x="5" y="0.8" width="1.6" height="3.4" fill="#bdbdbd"/><rect x="2.4" y="4.8" width="1.6" height="3.4" fill="#bdbdbd"/></svg>
<svg class="a" style="left:1524.2px;top:178.2px" width="2.4" height="9.4" viewBox="0 0 2.4 9.4"><rect x="0.1" y="0.1" width="2.2" height="2.2" fill="#bdbdbd"/><rect x="0.1" y="3.6" width="2.2" height="2.2" fill="#bdbdbd"/><rect x="0.1" y="7.1" width="2.2" height="2.2" fill="#bdbdbd"/></svg>
<div class="a" style="left:1153.6px;top:193px;width:382.4px;height:59.8px;background:#2c2c2c;"></div>
<div class="t" style="left:1168.80px;top:199.16px;font-size:10.8px;color:#5f5f5f;transform:scaleX(0.9566);">Script</div>
<div class="a" style="left:1310.8px;top:195.5px;width:221.2px;height:15.8px;background:#262626;border-radius:3px"></div>
<svg class="a" style="left:1313.3px;top:199.0px" width="7.5" height="9" viewBox="0 0 7.5 9"><path d="M0.3 0.3H5.2L7.2 2.3V8.7H0.3Z" fill="#5a5a5a"/></svg>
<div class="t" style="left:1324.00px;top:199.16px;font-size:10.8px;color:#5f5f5f;transform:scaleX(0.9248);">MazeManager</div>
<svg class="a" style="left:1520.6px;top:199.0px" width="9" height="9" viewBox="0 0 9 9"><circle cx="4.5" cy="4.5" r="3.8" fill="none" stroke="#6a6a6a" stroke-width="1"/><circle cx="4.5" cy="4.5" r="1.5" fill="#6a6a6a"/></svg>
<div class="t" style="left:1168.80px;top:216.66px;font-size:10.8px;color:#aaaaaa;transform:scaleX(0.9296);">Maze Generator</div>
<div class="a" style="left:1310.8px;top:213px;width:221.2px;height:15.8px;background:#1e1e1e;border-radius:3px"></div>
<div class="a" style="left:1516.8px;top:213px;width:15.2px;height:15.8px;background:#252525;border-radius:0 3px 3px 0"></div>
<svg class="a" style="left:1313.3px;top:216.5px" width="7.5" height="9" viewBox="0 0 7.5 9"><path d="M0.3 0.3H5.2L7.2 2.3V8.7H0.3Z" fill="#c8c8c8"/></svg>
<div class="t" style="left:1324.00px;top:216.66px;font-size:10.8px;color:#b4b4b4;transform:scaleX(0.9385);">Maze (Maze Generator)</div>
<svg class="a" style="left:1520.6px;top:216.5px" width="9" height="9" viewBox="0 0 9 9"><circle cx="4.5" cy="4.5" r="3.8" fill="none" stroke="#c4c4c4" stroke-width="1"/><circle cx="4.5" cy="4.5" r="1.5" fill="#c4c4c4"/></svg>
<div class="t" style="left:1168.80px;top:234.36px;font-size:10.8px;color:#aaaaaa;transform:scaleX(0.9340);">Solve Selector</div>
<div class="a" style="left:1310.8px;top:230.7px;width:221.2px;height:15.8px;background:#1e1e1e;border-radius:3px"></div>
<div class="a" style="left:1516.8px;top:230.7px;width:15.2px;height:15.8px;background:#252525;border-radius:0 3px 3px 0"></div>
<svg class="a" style="left:1313.3px;top:234.2px" width="7.5" height="9" viewBox="0 0 7.5 9"><path d="M0.3 0.3H5.2L7.2 2.3V8.7H0.3Z" fill="#c8c8c8"/></svg>
<div class="t" style="left:1324.00px;top:234.36px;font-size:10.8px;color:#b4b4b4;transform:scaleX(0.9462);">SolvingAlgorithm (Solver Selector)</div>
<svg class="a" style="left:1520.6px;top:234.2px" width="9" height="9" viewBox="0 0 9 9"><circle cx="4.5" cy="4.5" r="3.8" fill="none" stroke="#c4c4c4" stroke-width="1"/><circle cx="4.5" cy="4.5" r="1.5" fill="#c4c4c4"/></svg>
<div class="a" style="left:1153.6px;top:252.3px;width:382.4px;height:1.5px;background:#1f1f1f;"></div>
<div class="a" style="left:1253.5px;top:262px;width:182.5px;height:19px;background:#3a3a3a;border-radius:3px"></div>
<div class="t" style="left:1308.80px;top:266.86px;font-size:10.8px;color:#b4b4b4;transform:scaleX(0.9214);">Add Component</div>
<div class="a" style="left:0px;top:636px;width:1152px;height:1.5px;background:#171717;"></div>
<div class="a" style="left:0px;top:637.5px;width:1152px;height:16px;background:#222222;"></div>
<div class="a" style="left:0px;top:637.5px;width:65.5px;height:16px;background:#252525;border-radius:4px 4px 0 0"></div>
<div class="a" style="left:65.8px;top:637.5px;width:68.2px;height:16px;background:#2e2e2e;border-radius:4px 4px 0 0"></div>
<svg class="a" style="left:5.2px;top:642.5px" width="10" height="8.5" viewBox="0 0 10 8.5"><path d="M0.3 0.3H4L5 1.6H9.7V8.2H0.3Z" fill="#c4c4c4"/></svg>
<div class="t" style="left:18.60px;top:641.86px;font-size:10.8px;color:#b0b0b0;transform:scaleX(0.9493);">Project</div>
<svg class="a" style="left:72px;top:641px" width="8" height="10" viewBox="0 0 8 10"><rect x="0.4" y="0.4" width="7.2" height="9.2" fill="#c4c4c4"/><path d="M1.8 2.8H6.2M1.8 4.8H6.2M1.8 6.8H6.2" stroke="#2e2e2e" stroke-width="0.9"/></svg>
<div class="t" style="left:84.00px;top:641.86px;font-size:10.8px;color:#b0b0b0;transform:scaleX(0.9190);">Console</div>
<svg class="a" style="left:1140.5px;top:640.5px" width="2.4" height="9.4" viewBox="0 0 2.4 9.4"><rect x="0.1" y="0.1" width="2.2" height="2.2" fill="#bdbdbd"/><rect x="0.1" y="3.6" width="2.2" height="2.2" fill="#bdbdbd"/><rect x="0.1" y="7.1" width="2.2" height="2.2" fill="#bdbdbd"/></svg>
<div class="a" style="left:0px;top:653.5px;width:1152px;height:18.3px;background:#2a2a2a;"></div>
<div class="a" style="left:45.6px;top:653.5px;width:46.2px;height:18.3px;background:#383838;"></div>
<div class="a" style="left:31px;top:653.5px;width:1px;height:18.3px;background:#1f1f1f;"></div>
<div class="a" style="left:45px;top:653.5px;width:1px;height:18.3px;background:#1f1f1f;"></div>
<div class="a" style="left:92.7px;top:653.5px;width:1px;height:18.3px;background:#1f1f1f;"></div>
<div class="a" style="left:151px;top:653.5px;width:1px;height:18.3px;background:#1f1f1f;"></div>
<div class="a" style="left:192.4px;top:653.5px;width:1px;height:18.3px;background:#1f1f1f;"></div>
<div class="t" style="left:3.30px;top:658.76px;font-size:10.8px;color:#aaaaaa;transform:scaleX(0.9158);">Clear</div>
<svg class="a" style="left:35.65px;top:660.5px" width="5.5" height="4" viewBox="0 0 5.5 4"><path d="M0 0H5.5L2.75 4z" fill="#c4c4c4"/></svg>
<div class="t" style="left:48.20px;top:658.76px;font-size:10.8px;color:#b0b0b0;transform:scaleX(0.9141);">Collapse</div>
<div class="t" style="left:96.40px;top:658.76px;font-size:10.8px;color:#aaaaaa;transform:scaleX(0.8767);">Error Pause</div>
<div class="t" style="left:154.30px;top:658.76px;font-size:10.8px;color:#aaaaaa;transform:scaleX(0.8878);">Editor</div>
<svg class="a" style="left:182.95px;top:660.5px" width="5.5" height="4" viewBox="0 0 5.5 4"><path d="M0 0H5.5L2.75 4z" fill="#c4c4c4"/></svg>
<div class="a" style="left:828.6px;top:655.3px;width:240.4px;height:14.5px;background:#1e1e1e;border-radius:4px"></div>
<svg class="a" style="left:832.8px;top:659px" width="6" height="6" viewBox="0 0 6 6"><circle cx="2.5" cy="2.5" r="1.8" fill="none" stroke="#bdbdbd" stroke-width="1"/><path d="M3.8 3.8L5.6 5.6" stroke="#bdbdbd" stroke-width="1.1"/></svg>
<div class="a" style="left:1071.2px;top:655px;width:25.299999999999955px;height:16.5px;background:#3a3a3a;"></div>
<div class="a" style="left:1097.7px;top:655px;width:25.700000000000045px;height:16.5px;background:#3a3a3a;"></div>
<div class="a" style="left:1124.8px;top:655px;width:26.200000000000045px;height:16.5px;background:#3a3a3a;"></div>
<svg class="a" style="left:1074.7px;top:657.8px" width="11" height="11" viewBox="0 0 11 11"><circle cx="5.3" cy="5.2" r="4.9" fill="#d0d0d0"/><path d="M6.5 9L9.5 10.8L8.8 7.8Z" fill="#d0d0d0"/><rect x="4.6" y="2.2" width="1.4" height="4" fill="#3a3a3a"/><rect x="4.6" y="7" width="1.4" height="1.3" fill="#3a3a3a"/></svg>
<div class="t" style="left:1088.00px;top:658.46px;font-size:10.8px;color:#979797;transform:scaleX(0.6833);">2</div>
<svg class="a" style="left:1101.7px;top:657px" width="10" height="11.2" viewBox="0 0 10 11.2"><path d="M5 0.2L9.9 11H0.1Z" fill="#5e5e5e"/><rect x="4.4" y="4" width="1.2" height="4" fill="#3a3a3a"/><rect x="4.4" y="9" width="1.2" height="1.1" fill="#3a3a3a"/></svg>
<div class="t" style="left:1114.90px;top:658.46px;font-size:10.8px;color:#7c7c7c;transform:scaleX(0.8333);">0</div>
<svg class="a" style="left:1128px;top:657.8px" width="11" height="11" viewBox="0 0 11 11"><path d="M3.2 0.3H7.8L10.7 3.2V7.8L7.8 10.7H3.2L0.3 7.8V3.2Z" fill="#a0a0a0"/><rect x="4.8" y="2.2" width="1.4" height="4" fill="#3a3a3a"/><rect x="4.8" y="7" width="1.4" height="1.3" fill="#3a3a3a"/></svg>
<div class="t" style="left:1141.90px;top:658.46px;font-size:10.8px;color:#7c7c7c;transform:scaleX(0.8667);">0</div>
<div class="a" style="left:0px;top:671.8px;width:1152px;height:172px;background:#2e2e2e;"></div>
<div class="a" style="left:0px;top:671.3px;width:1152px;height:1.6px;background:#1f1f1f;"></div>
<div class="a" style="left:0px;top:705.6px;width:1152px;height:32px;background:#323232;"></div>
<div class="a" style="left:0px;top:791.5px;width:1152px;height:1px;background:#252525;"></div>
<svg class="a" style="left:7.8px;top:677.6px" width="21" height="25" viewBox="0 0 21 25"><circle cx="10.5" cy="11" r="10.2" fill="#d6d6d6"/><path d="M13 19L19.5 24.5L18 16Z" fill="#d6d6d6"/><path d="M9.3 4.5H11.7L11.3 13.5H9.7Z" fill="#2e2e2e"/><circle cx="10.5" cy="16.3" r="1.3" fill="#2e2e2e"/></svg>
<div class="t" style="left:31.90px;top:676.86px;font-size:10.8px;color:#b0b0b0;transform:scaleX(0.9430);">[17:45:47] Maze solved!</div>
<div class="t" style="left:31.90px;top:689.86px;font-size:10.8px;color:#b0b0b0;transform:scaleX(0.9354);">UnityEngine.Debug:Log (object)</div>
<svg class="a" style="left:7.8px;top:710px" width="21" height="25" viewBox="0 0 21 25"><circle cx="10.5" cy="11" r="10.2" fill="#d6d6d6"/><path d="M13 19L19.5 24.5L18 16Z" fill="#d6d6d6"/><path d="M9.3 4.5H11.7L11.3 13.5H9.7Z" fill="#2e2e2e"/><circle cx="10.5" cy="16.3" r="1.3" fill="#2e2e2e"/></svg>
<div class="t" style="left:31.90px;top:709.46px;font-size:10.8px;color:#b0b0b0;transform:scaleX(0.9226);">[17:45:47] Steps: 287</div>
<div class="t" style="left:34.50px;top:722.56px;font-size:10.8px;color:#b0b0b0;transform:scaleX(0.9266);">Step delay: 0.01</div>
<svg class="a" style="left:1134px;top:681.5px" width="15" height="15" viewBox="0 0 15 15"><circle cx="7.5" cy="7.5" r="7.3" fill="#4c4c4c"/></svg>
<div class="t" style="left:1139.20px;top:684.53px;font-size:10px;color:#909090;transform:scaleX(0.7167);">1</div>
<svg class="a" style="left:1134px;top:714.5px" width="15" height="15" viewBox="0 0 15 15"><circle cx="7.5" cy="7.5" r="7.3" fill="#4c4c4c"/></svg>
<div class="t" style="left:1139.20px;top:717.53px;font-size:10px;color:#909090;transform:scaleX(0.7167);">1</div>
<div class="a" style="left:0px;top:843.8px;width:1536px;height:20.2px;background:#141414;"></div>
<svg class="a" style="left:2px;top:848px" width="11.5" height="12.7" viewBox="0 0 11.5 12.7"><circle cx="5.6" cy="5.6" r="5.4" fill="#d6d6d6"/><path d="M7 10L10.5 12.5L9.8 8.5Z" fill="#d6d6d6"/><rect x="4.9" y="2.2" width="1.4" height="4.2" fill="#141414"/><rect x="4.9" y="7.3" width="1.4" height="1.3" fill="#141414"/></svg>
<div class="t" style="left:16.10px;top:850.51px;font-size:10.5px;color:#aaaaaa;transform:scaleX(0.9213);">Steps: 287</div>
<svg class="a" style="left:1456.2px;top:848.6px" width="12" height="13.4" viewBox="0 0 12 13.4"><path d="M6.00 0.32L7.26 2.38L9.35 1.56L9.30 4.07L11.42 4.80L10.09 6.80L11.42 8.80L9.30 9.53L9.35 12.04L7.26 11.22L6.00 13.28L4.74 11.22L2.65 12.04L2.70 9.53L0.58 8.80L1.92 6.80L0.58 4.80L2.70 4.07L2.65 1.56L4.74 2.38Z" fill="#e3b21e"/><rect x="8.2" y="6.2" width="1.6" height="3.6" fill="#141414"/><rect x="8.2" y="10.6" width="1.6" height="1.4" fill="#141414"/></svg>
<svg class="a" style="left:1477.5px;top:848.8px" width="12" height="13" viewBox="0 0 12 13"><ellipse cx="5.8" cy="2.8" rx="5" ry="2.3" fill="#bdbdbd"/><path d="M0.8 4.6C0.8 5.9 3 6.9 5.8 6.9S10.8 5.9 10.8 4.6V6.6C10.8 7.9 8.6 8.9 5.8 8.9S0.8 7.9 0.8 6.6Z" fill="#bdbdbd"/><path d="M0.8 8.6C0.8 9.9 3 10.9 5.8 10.9S10.8 9.9 10.8 8.6V10.3C10.8 11.6 8.6 12.6 5.8 12.6S0.8 11.6 0.8 10.3Z" fill="#bdbdbd"/><path d="M1.2 1.5L11 12.6" stroke="#141414" stroke-width="1.4"/><path d="M2.2 1.2L11.8 12" stroke="#bdbdbd" stroke-width="0.9"/></svg>
<svg class="a" style="left:1498.4px;top:848.8px" width="12.2" height="13" viewBox="0 0 12.2 13"><path d="M2 4.5A5 5 0 0 1 10.2 3.6M10.2 8.5A5 5 0 0 1 2 9.4" fill="none" stroke="#b0b0b0" stroke-width="1.2"/><path d="M9 1.8L10.8 4L8.2 4.6Z M3.2 11.2L1.4 9L4 8.4Z" fill="#b0b0b0"/><circle cx="6.1" cy="6.5" r="2.6" fill="#b0b0b0"/><path d="M1 1L11.2 12" stroke="#141414" stroke-width="1.3"/><path d="M1.8 0.6L11.8 11.4" stroke="#b0b0b0" stroke-width="0.9"/></svg>
<svg class="a" style="left:1519px;top:849px" width="12" height="12" viewBox="0 0 12 12"><circle cx="6" cy="6" r="5.3" fill="none" stroke="#bdbdbd" stroke-width="1.1"/><path d="M3.3 6.2L5.2 8L8.8 4.2" fill="none" stroke="#bdbdbd" stroke-width="1.1"/></svg>
</body></html>
